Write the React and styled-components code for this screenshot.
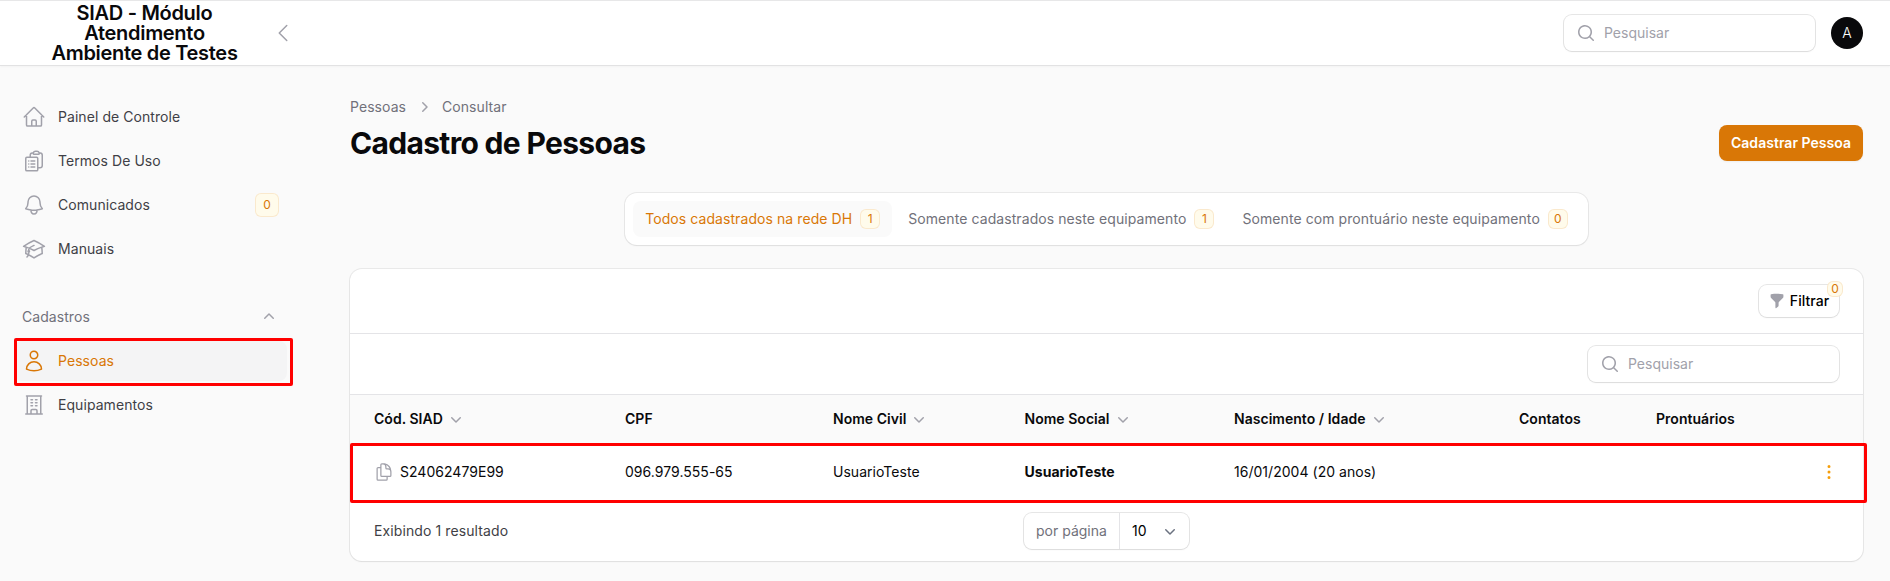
import React from "react";
import styled, { createGlobalStyle, css } from "styled-components";
import {
  HiOutlineHome,
  HiOutlineClipboardDocumentList,
  HiOutlineBell,
  HiOutlineAcademicCap,
  HiOutlineUser,
  HiOutlineBuildingOffice,
  HiOutlineDocumentDuplicate,
  HiOutlineChevronLeft,
  HiMiniMagnifyingGlass,
  HiMiniChevronUp,
  HiMiniChevronDown,
  HiMiniChevronRight,
  HiMiniFunnel,
  HiMiniEllipsisVertical,
} from "react-icons/hi2";

const GlobalStyle = createGlobalStyle`
  *, *::before, *::after { box-sizing: border-box; }
  body {
    margin: 0;
    background: #fafafa;
    color: #09090b;
    font-family: Inter, "Liberation Sans", sans-serif;
    font-size: 14px;
    line-height: 20px;
    overflow: hidden;
  }
  button, input { font: inherit; border: 0; padding: 0; margin: 0; background: none; }
  svg { display: block; flex-shrink: 0; }
`;

const ring = css`
  box-shadow: 0 0 0 1px ${(p) => p.$ring || "rgba(9, 9, 11, 0.1)"}, 0 1px 2px rgba(0, 0, 0, 0.05);
`;

const Page = styled.div`
  height: 581px;
  display: flex;
  flex-direction: column;
`;

const Topbar = styled.header`
  height: 66px;
  flex-shrink: 0;
  display: flex;
  align-items: center;
  padding-right: 27px;
  background: #fff;
  border-top: 1px solid #e7e7e8;
  border-bottom: 1px solid #e2e2e3;
  box-shadow: 0 1px 2px rgba(0, 0, 0, 0.03);
`;

const Brand = styled.div`
  width: 205px;
  margin-left: 42px;
  text-align: center;
  font-size: 20px;
  line-height: 20px;
  font-weight: 600;
  letter-spacing: -0.3px;
`;

const CollapseButton = styled.button`
  margin-left: 24px;
  color: #a1a1aa;
`;

const TopActions = styled.div`
  margin-left: auto;
  display: flex;
  align-items: center;
  gap: 16px;
`;

const SearchField = styled.label`
  width: 251px;
  height: 36px;
  display: flex;
  align-items: center;
  gap: 8px;
  padding-left: 12px;
  background: #fff;
  border-radius: 8px;
  color: #a1a1aa;
  ${ring}

  input {
    min-width: 0;
    flex: 1;
    outline: none;
    color: #09090b;
  }
  input::placeholder { color: #a1a1aa; opacity: 1; }
`;

const Avatar = styled.div`
  width: 32px;
  height: 32px;
  display: grid;
  place-items: center;
  border-radius: 50%;
  background: #09090b;
  color: #fff;
  font-size: 14px;
  font-weight: 300;
`;

const Body = styled.div`
  flex: 1;
  display: flex;
`;

const Sidebar = styled.nav`
  width: 301px;
  flex-shrink: 0;
  padding: 31px 14px 0;
  letter-spacing: 0.06px;
`;

const NavList = styled.div`
  display: flex;
  flex-direction: column;
  gap: 4px;
`;

const NavItem = styled.a`
  position: relative;
  height: 40px;
  display: flex;
  align-items: center;
  gap: 12px;
  padding: 8px;
  border-radius: 8px;
  color: ${(p) => (p.$active ? "#d97706" : "#3f3f46")};
  background: ${(p) => (p.$active ? "#f4f4f5" : "transparent")};

  svg { color: ${(p) => (p.$active ? "#d97706" : "#a1a1aa")}; }
  span:nth-of-type(1) { flex: 1; }
`;

const GroupLabel = styled.div`
  height: 40px;
  margin-top: 28px;
  margin-bottom: 4px;
  display: flex;
  align-items: center;
  justify-content: space-between;
  padding: 0 8px;
  color: #71717a;

  svg { color: #a1a1aa; }
`;

const Highlight = styled.i`
  position: absolute;
  inset: ${(p) => p.$inset};
  border: 3px solid #ff0000;
  border-radius: 2px;
  pointer-events: none;
`;

const Badge = styled.b`
  min-width: ${(p) => p.$size}px;
  height: ${(p) => p.$size}px;
  display: grid;
  place-items: center;
  border-radius: 6px;
  background: #fffbeb;
  color: #d97706;
  box-shadow: inset 0 0 0 1px rgba(217, 119, 6, 0.13);
  font-size: 12px;
  line-height: 16px;
  font-weight: 400;
`;

const Main = styled.main`
  flex: 1;
  min-width: 0;
  padding: 31px 27px 0 49px;
`;

const Breadcrumbs = styled.div`
  display: flex;
  align-items: center;
  gap: 8px;
  color: #71717a;
  letter-spacing: 0.06px;

  svg { color: #a1a1aa; }
`;

const TitleRow = styled.div`
  margin-top: 8px;
  display: flex;
  align-items: center;
  justify-content: space-between;
`;

const Title = styled.h1`
  margin: 0;
  font-size: 30px;
  line-height: 36px;
  font-weight: 700;
  letter-spacing: -0.68px;
`;

const PrimaryButton = styled.button`
  width: 144px;
  height: 36px;
  border-radius: 8px;
  background: #d97706;
  color: #fff;
  font-weight: 600;
  letter-spacing: 0.03px;
  box-shadow: 0 1px 2px rgba(0, 0, 0, 0.05);
`;

const Tabs = styled.div`
  width: fit-content;
  margin: 32px auto 0;
  display: flex;
  gap: 4px;
  padding: 8px;
  border-radius: 12px;
  background: #fff;
  ${ring}
`;

const Tab = styled.button`
  height: 36px;
  display: flex;
  align-items: center;
  gap: 8px;
  padding: 0 12px;
  border-radius: 8px;
  letter-spacing: 0.078px;
  color: ${(p) => (p.$active ? "#d97706" : "#71717a")};
  background: ${(p) => (p.$active ? "#fafafa" : "transparent")};
`;

const Card = styled.section`
  margin-top: 24px;
  border-radius: 12px;
  background: #fff;
  ${ring}
`;

const Toolbar = styled.div`
  height: ${(p) => p.$height}px;
  display: flex;
  align-items: center;
  justify-content: flex-end;
  padding: 0 24px;
  border-bottom: 1px solid #e4e4e7;
`;

const FilterButton = styled.button`
  position: relative;
  width: 80px;
  height: 32px;
  display: flex;
  align-items: center;
  justify-content: center;
  gap: 5px;
  border-radius: 8px;
  font-weight: 500;
  letter-spacing: 0.05px;
  ${ring}

  svg { color: #a1a1aa; }
  ${Badge} {
    position: absolute;
    top: -4px;
    right: -4px;
  }
`;

const TableRow = styled.div`
  position: relative;
  height: ${(p) => p.$height}px;
  display: grid;
  grid-template-columns: 251px 208px 191.5px 209.5px 285px 137px 1fr 20px;
  align-items: center;
  padding: ${(p) => (p.$head ? "0 24px" : "0 24px 2px")};
  background: ${(p) => (p.$head ? "#fafafa" : "#fff")};
  font-weight: ${(p) => (p.$head ? 600 : 400)};
  letter-spacing: 0.03px;
`;

const Cell = styled.div`
  display: flex;
  align-items: center;
  gap: ${(p) => p.$gap || 3}px;
  font-weight: ${(p) => (p.$bold ? 700 : "inherit")};

  svg { color: ${(p) => p.$iconColor || "#a1a1aa"}; }
`;

const Footer = styled.footer`
  height: 58px;
  display: grid;
  grid-template-columns: 1fr auto 1fr;
  align-items: center;
  padding: 0 24px 2px;
  color: #3f3f46;
  letter-spacing: 0.1px;
`;

const PageSize = styled.div`
  height: 36px;
  display: flex;
  border-radius: 8px;
  color: #09090b;
  letter-spacing: 0;
  ${ring}
`;

const PageSizeLabel = styled.span`
  width: 96px;
  padding: 8px 0 8px 12px;
  color: #71717a;
  border-right: 1px solid #e4e4e7;
`;

const PageSizeValue = styled.button`
  width: 69px;
  display: flex;
  align-items: center;
  justify-content: space-between;
  padding: 0 9px 0 12px;

  svg { color: #6b7280; }
`;

const menu = [
  { label: "Painel de Controle", Icon: HiOutlineHome },
  { label: "Termos De Uso", Icon: HiOutlineClipboardDocumentList },
  { label: "Comunicados", Icon: HiOutlineBell, badge: 0 },
  { label: "Manuais", Icon: HiOutlineAcademicCap },
];

const records = [
  { label: "Pessoas", Icon: HiOutlineUser, active: true },
  { label: "Equipamentos", Icon: HiOutlineBuildingOffice },
];

const tabs = [
  { label: "Todos cadastrados na rede DH", count: 1, active: true },
  { label: "Somente cadastrados neste equipamento", count: 1 },
  { label: "Somente com prontuário neste equipamento", count: 0 },
];

const columns = [
  { label: "Cód. SIAD", sortable: true },
  { label: "CPF" },
  { label: "Nome Civil", sortable: true },
  { label: "Nome Social", sortable: true },
  { label: "Nascimento / Idade", sortable: true },
  { label: "Contatos" },
  { label: "Prontuários" },
];

function NavLinks({ items }) {
  return (
    <NavList>
      {items.map(({ label, Icon, active, badge }) => (
        <NavItem key={label} $active={active}>
          <Icon size={24} />
          <span>{label}</span>
          {badge !== undefined && <Badge $size={24}>{badge}</Badge>}
          {active && <Highlight $inset="-3px -6px -5px 0" />}
        </NavItem>
      ))}
    </NavList>
  );
}

function Search() {
  return (
    <SearchField>
      <HiMiniMagnifyingGlass size={20} />
      <input placeholder="Pesquisar" />
    </SearchField>
  );
}

export default function App() {
  return (
    <Page>
      <GlobalStyle />
      <Topbar>
        <Brand>
          SIAD - Módulo
          <br />
          Atendimento
          <br />
          Ambiente de Testes
        </Brand>
        <CollapseButton>
          <HiOutlineChevronLeft size={24} />
        </CollapseButton>
        <TopActions>
          <Search />
          <Avatar>A</Avatar>
        </TopActions>
      </Topbar>
      <Body>
        <Sidebar>
          <NavLinks items={menu} />
          <GroupLabel>
            Cadastros
            <HiMiniChevronUp size={20} />
          </GroupLabel>
          <NavLinks items={records} />
        </Sidebar>
        <Main>
          <Breadcrumbs>
            Pessoas
            <HiMiniChevronRight size={20} />
            Consultar
          </Breadcrumbs>
          <TitleRow>
            <Title>Cadastro de Pessoas</Title>
            <PrimaryButton>Cadastrar Pessoa</PrimaryButton>
          </TitleRow>
          <Tabs $ring="rgba(9, 9, 11, 0.07)">
            {tabs.map((t) => (
              <Tab key={t.label} $active={t.active}>
                {t.label}
                <Badge $size={20}>{t.count}</Badge>
              </Tab>
            ))}
          </Tabs>
          <Card $ring="rgba(9, 9, 11, 0.07)">
            <Toolbar $height={65}>
              <FilterButton>
                <HiMiniFunnel size={16} />
                Filtrar
                <Badge $size={16}>0</Badge>
              </FilterButton>
            </Toolbar>
            <Toolbar $height={61}>
              <Search />
            </Toolbar>
            <TableRow $head $height={48}>
              {columns.map((c) => (
                <Cell key={c.label}>
                  {c.label}
                  {c.sortable && <HiMiniChevronDown size={20} />}
                </Cell>
              ))}
            </TableRow>
            <TableRow $height={60}>
              <Cell $gap={6}>
                <HiOutlineDocumentDuplicate size={20} />
                S24062479E99
              </Cell>
              <Cell>096.979.555-65</Cell>
              <Cell>UsuarioTeste</Cell>
              <Cell $bold>UsuarioTeste</Cell>
              <Cell>16/01/2004 (20 anos)</Cell>
              <Cell />
              <Cell />
              <Cell $iconColor="#f59e0b">
                <HiMiniEllipsisVertical size={20} />
              </Cell>
              <Highlight $inset="0 -4px 0 0" />
            </TableRow>
            <Footer>
              <span>Exibindo 1 resultado</span>
              <PageSize>
                <PageSizeLabel>por página</PageSizeLabel>
                <PageSizeValue>
                  10
                  <HiMiniChevronDown size={20} />
                </PageSizeValue>
              </PageSize>
            </Footer>
          </Card>
        </Main>
      </Body>
    </Page>
  );
}
